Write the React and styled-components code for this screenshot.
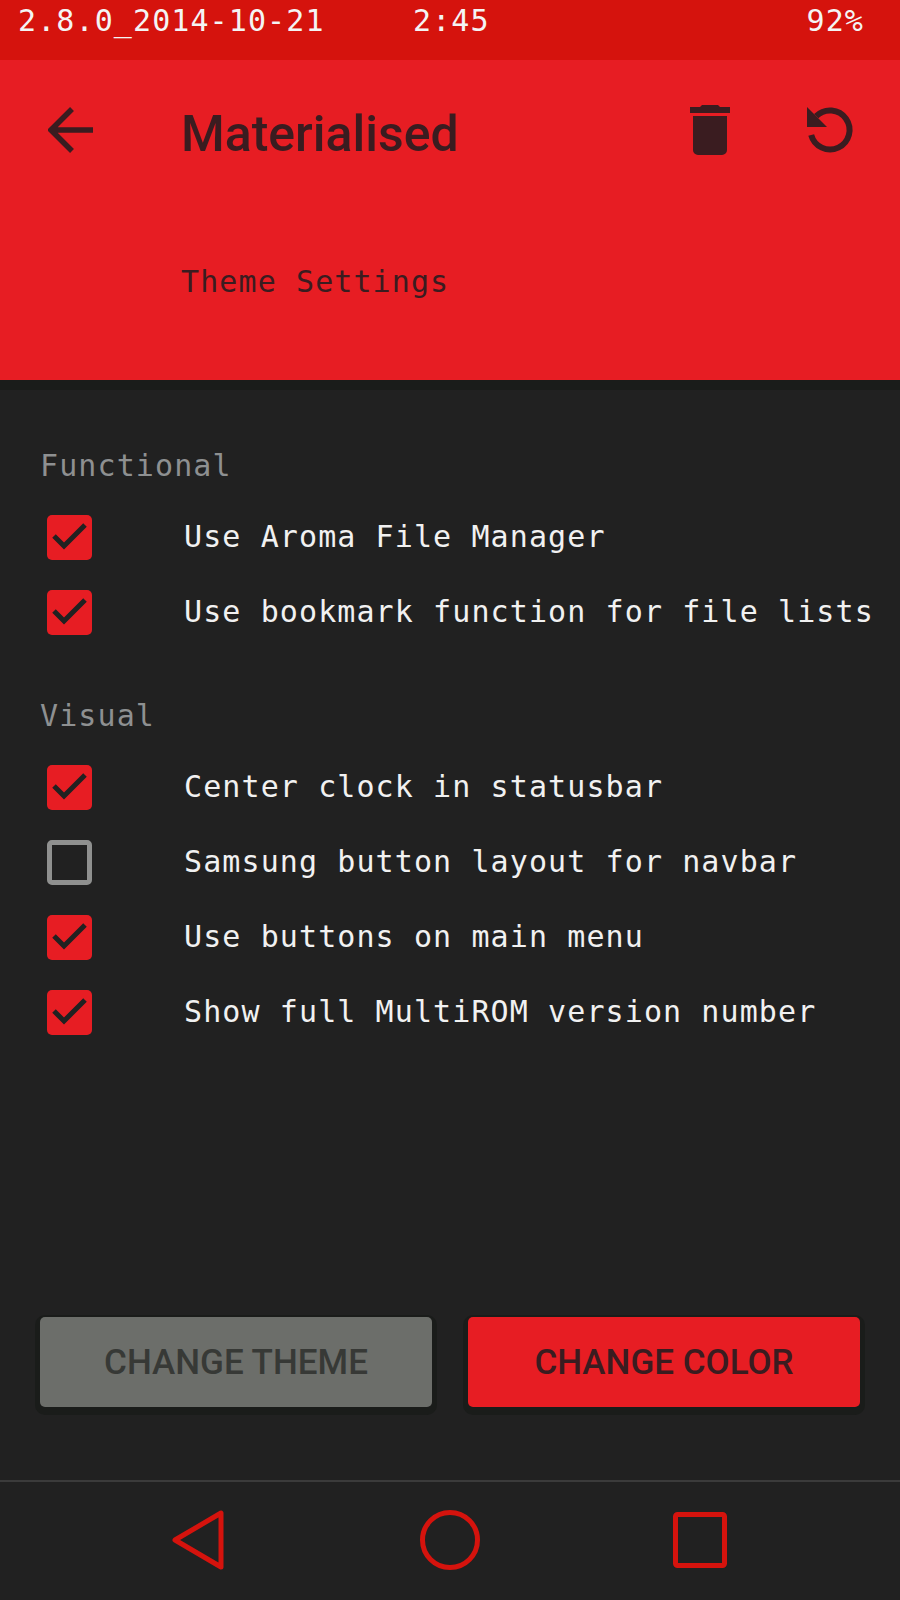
import styled, { createGlobalStyle } from "styled-components";

const GlobalStyle = createGlobalStyle`
  html, body {
    margin: 0;
    padding: 0;
    background: #212121;
  }
`;

const mono = `"DejaVu Sans Mono", "Liberation Mono", monospace`;

const functionalOptions = [
  { label: "Use Aroma File Manager", checked: true },
  { label: "Use bookmark function for file lists", checked: true },
];

const visualOptions = [
  { label: "Center clock in statusbar", checked: true },
  { label: "Samsung button layout for navbar", checked: false },
  { label: "Use buttons on main menu", checked: true },
  { label: "Show full MultiROM version number", checked: true },
];

function OptionList({ options }) {
  return options.map((option) => (
    <OptionRow key={option.label}>
      <CheckBox $checked={option.checked}>
        {option.checked && (
          <svg width="45" height="45" viewBox="0 0 45 45">
            <path d="M7 21l10 10L38 10" fill="none" stroke="#212121" strokeWidth="5" />
          </svg>
        )}
      </CheckBox>
      <OptionLabel>{option.label}</OptionLabel>
    </OptionRow>
  ));
}

export default function App() {
  return (
    <Screen>
      <GlobalStyle />
      <StatusBar>
        <StatusText>2.8.0_2014-10-21</StatusText>
        <StatusText>2:45</StatusText>
        <StatusRight>92%</StatusRight>
      </StatusBar>

      <Header>
        <TopRow>
          <BackIcon viewBox="0 0 46 46" width="46" height="46">
            <path d="M45 23H5M24 2L3 23l21 21" fill="none" stroke="#3a1c20" strokeWidth="5.5" />
          </BackIcon>
          <Title>Materialised</Title>
          <TrashIcon viewBox="0 0 40 50" width="40" height="50">
            <path
              d="M12 0h16l2 2h10v6H0V2h10zM3 11h34v34a5 5 0 0 1-5 5H8a5 5 0 0 1-5-5z"
              fill="#3a1c20"
            />
          </TrashIcon>
          <ResetIcon viewBox="0 0 50 50" width="50" height="50">
            <path
              d="M11.2 11.2A19.5 19.5 0 1 1 6.2 30"
              fill="none"
              stroke="#3a1c20"
              strokeWidth="6"
            />
            <path d="M2 2v20h20z" fill="#3a1c20" />
          </ResetIcon>
        </TopRow>
        <Subtitle>Theme Settings</Subtitle>
      </Header>

      <Content>
        <SectionTitle>Functional</SectionTitle>
        <OptionList options={functionalOptions} />
        <VisualTitle>Visual</VisualTitle>
        <OptionList options={visualOptions} />
      </Content>

      <ButtonRow>
        <ActionButton type="button" $muted>
          CHANGE THEME
        </ActionButton>
        <ActionButton type="button">CHANGE COLOR</ActionButton>
      </ButtonRow>

      <NavBar>
        <svg width="52" height="60" viewBox="0 0 52 60">
          <path d="M3 30L49 3v54z" fill="none" stroke="#d5130d" strokeWidth="5" strokeLinejoin="round" />
        </svg>
        <svg width="60" height="60" viewBox="0 0 60 60">
          <circle cx="30" cy="30" r="27.5" fill="none" stroke="#d5130d" strokeWidth="5" />
        </svg>
        <SquareIcon width="54" height="56" viewBox="0 0 54 56">
          <rect x="2.5" y="2.5" width="49" height="51" rx="2" fill="none" stroke="#d5130d" strokeWidth="5" />
        </SquareIcon>
      </NavBar>
    </Screen>
  );
}

const Screen = styled.div`
  width: 900px;
  height: 1600px;
  display: flex;
  flex-direction: column;
  background: #212121;
  overflow: hidden;
`;

const StatusBar = styled.div`
  height: 60px;
  box-sizing: border-box;
  padding: 3px 36px 0 18px;
  display: grid;
  grid-template-columns: 395px auto 1fr;
  background: #d5130d;
`;

const StatusText = styled.span`
  font-family: ${mono};
  font-size: 30px;
  letter-spacing: 1.1px;
  line-height: 36px;
  color: #f4f4f4;
`;

const StatusRight = styled(StatusText)`
  text-align: right;
`;

const Header = styled.header`
  height: 320px;
  flex: none;
  box-sizing: border-box;
  padding: 45px 45px 0 48px;
  background: #e71d23;
  box-shadow: 0 10px 0 #1a1c1a;
`;

const TopRow = styled.div`
  display: flex;
  align-items: center;
  height: 50px;
`;

const BackIcon = styled.svg`
  flex: none;
`;

const Title = styled.h1`
  flex: 1;
  margin: 8px 0 0 87px;
  font-family: Roboto, sans-serif;
  font-size: 50px;
  font-weight: 500;
  color: #3a1c20;
`;

const TrashIcon = styled.svg`
  flex: none;
  margin-right: 75px;
`;

const ResetIcon = styled.svg`
  flex: none;
`;

const Subtitle = styled.div`
  margin: 109px 0 0 133px;
  font-family: ${mono};
  font-size: 30px;
  letter-spacing: 1.1px;
  line-height: 36px;
  color: #3a1c20;
`;

const Content = styled.main`
  flex: 1;
  padding: 68px 0 0 40px;
`;

const SectionTitle = styled.div`
  height: 36px;
  margin-bottom: 31px;
  font-family: ${mono};
  font-size: 30px;
  letter-spacing: 1.1px;
  line-height: 36px;
  color: #8e9091;
`;

const VisualTitle = styled(SectionTitle)`
  margin-top: 63px;
`;

const OptionRow = styled.div`
  display: flex;
  align-items: center;
  height: 45px;
  margin: 0 0 30px 7px;
`;

const CheckBox = styled.span`
  flex: none;
  width: 45px;
  height: 45px;
  box-sizing: border-box;
  display: flex;
  align-items: center;
  justify-content: center;
  border-radius: 5px;
  background: ${(p) => (p.$checked ? "#e71d23" : "transparent")};
  border: ${(p) => (p.$checked ? "none" : "5px solid #8f908f")};
`;

const OptionLabel = styled.span`
  margin: -2px 0 0 92px;
  font-family: ${mono};
  font-size: 30px;
  letter-spacing: 1.1px;
  line-height: 36px;
  white-space: nowrap;
  color: #f1f1f1;
`;

const ButtonRow = styled.div`
  display: flex;
  gap: 36px;
  padding: 0 40px 73px;
`;

const ActionButton = styled.button`
  flex: 1;
  height: 90px;
  border: none;
  border-radius: 5px;
  padding: 0;
  font-family: Roboto, sans-serif;
  font-size: 35px;
  font-weight: 500;
  background: ${(p) => (p.$muted ? "#6c6e6a" : "#e71d23")};
  color: ${(p) => (p.$muted ? "#373936" : "#3a1c20")};
  box-shadow: 0 3px 0 5px #1a1c1a;
`;

const NavBar = styled.nav`
  height: 120px;
  flex: none;
  box-sizing: border-box;
  display: flex;
  align-items: flex-start;
  gap: 196px;
  padding: 28px 0 0 172px;
  border-top: 2px solid #3b3b3b;
`;

const SquareIcon = styled.svg`
  margin: 2px 0 0 -3px;
`;
